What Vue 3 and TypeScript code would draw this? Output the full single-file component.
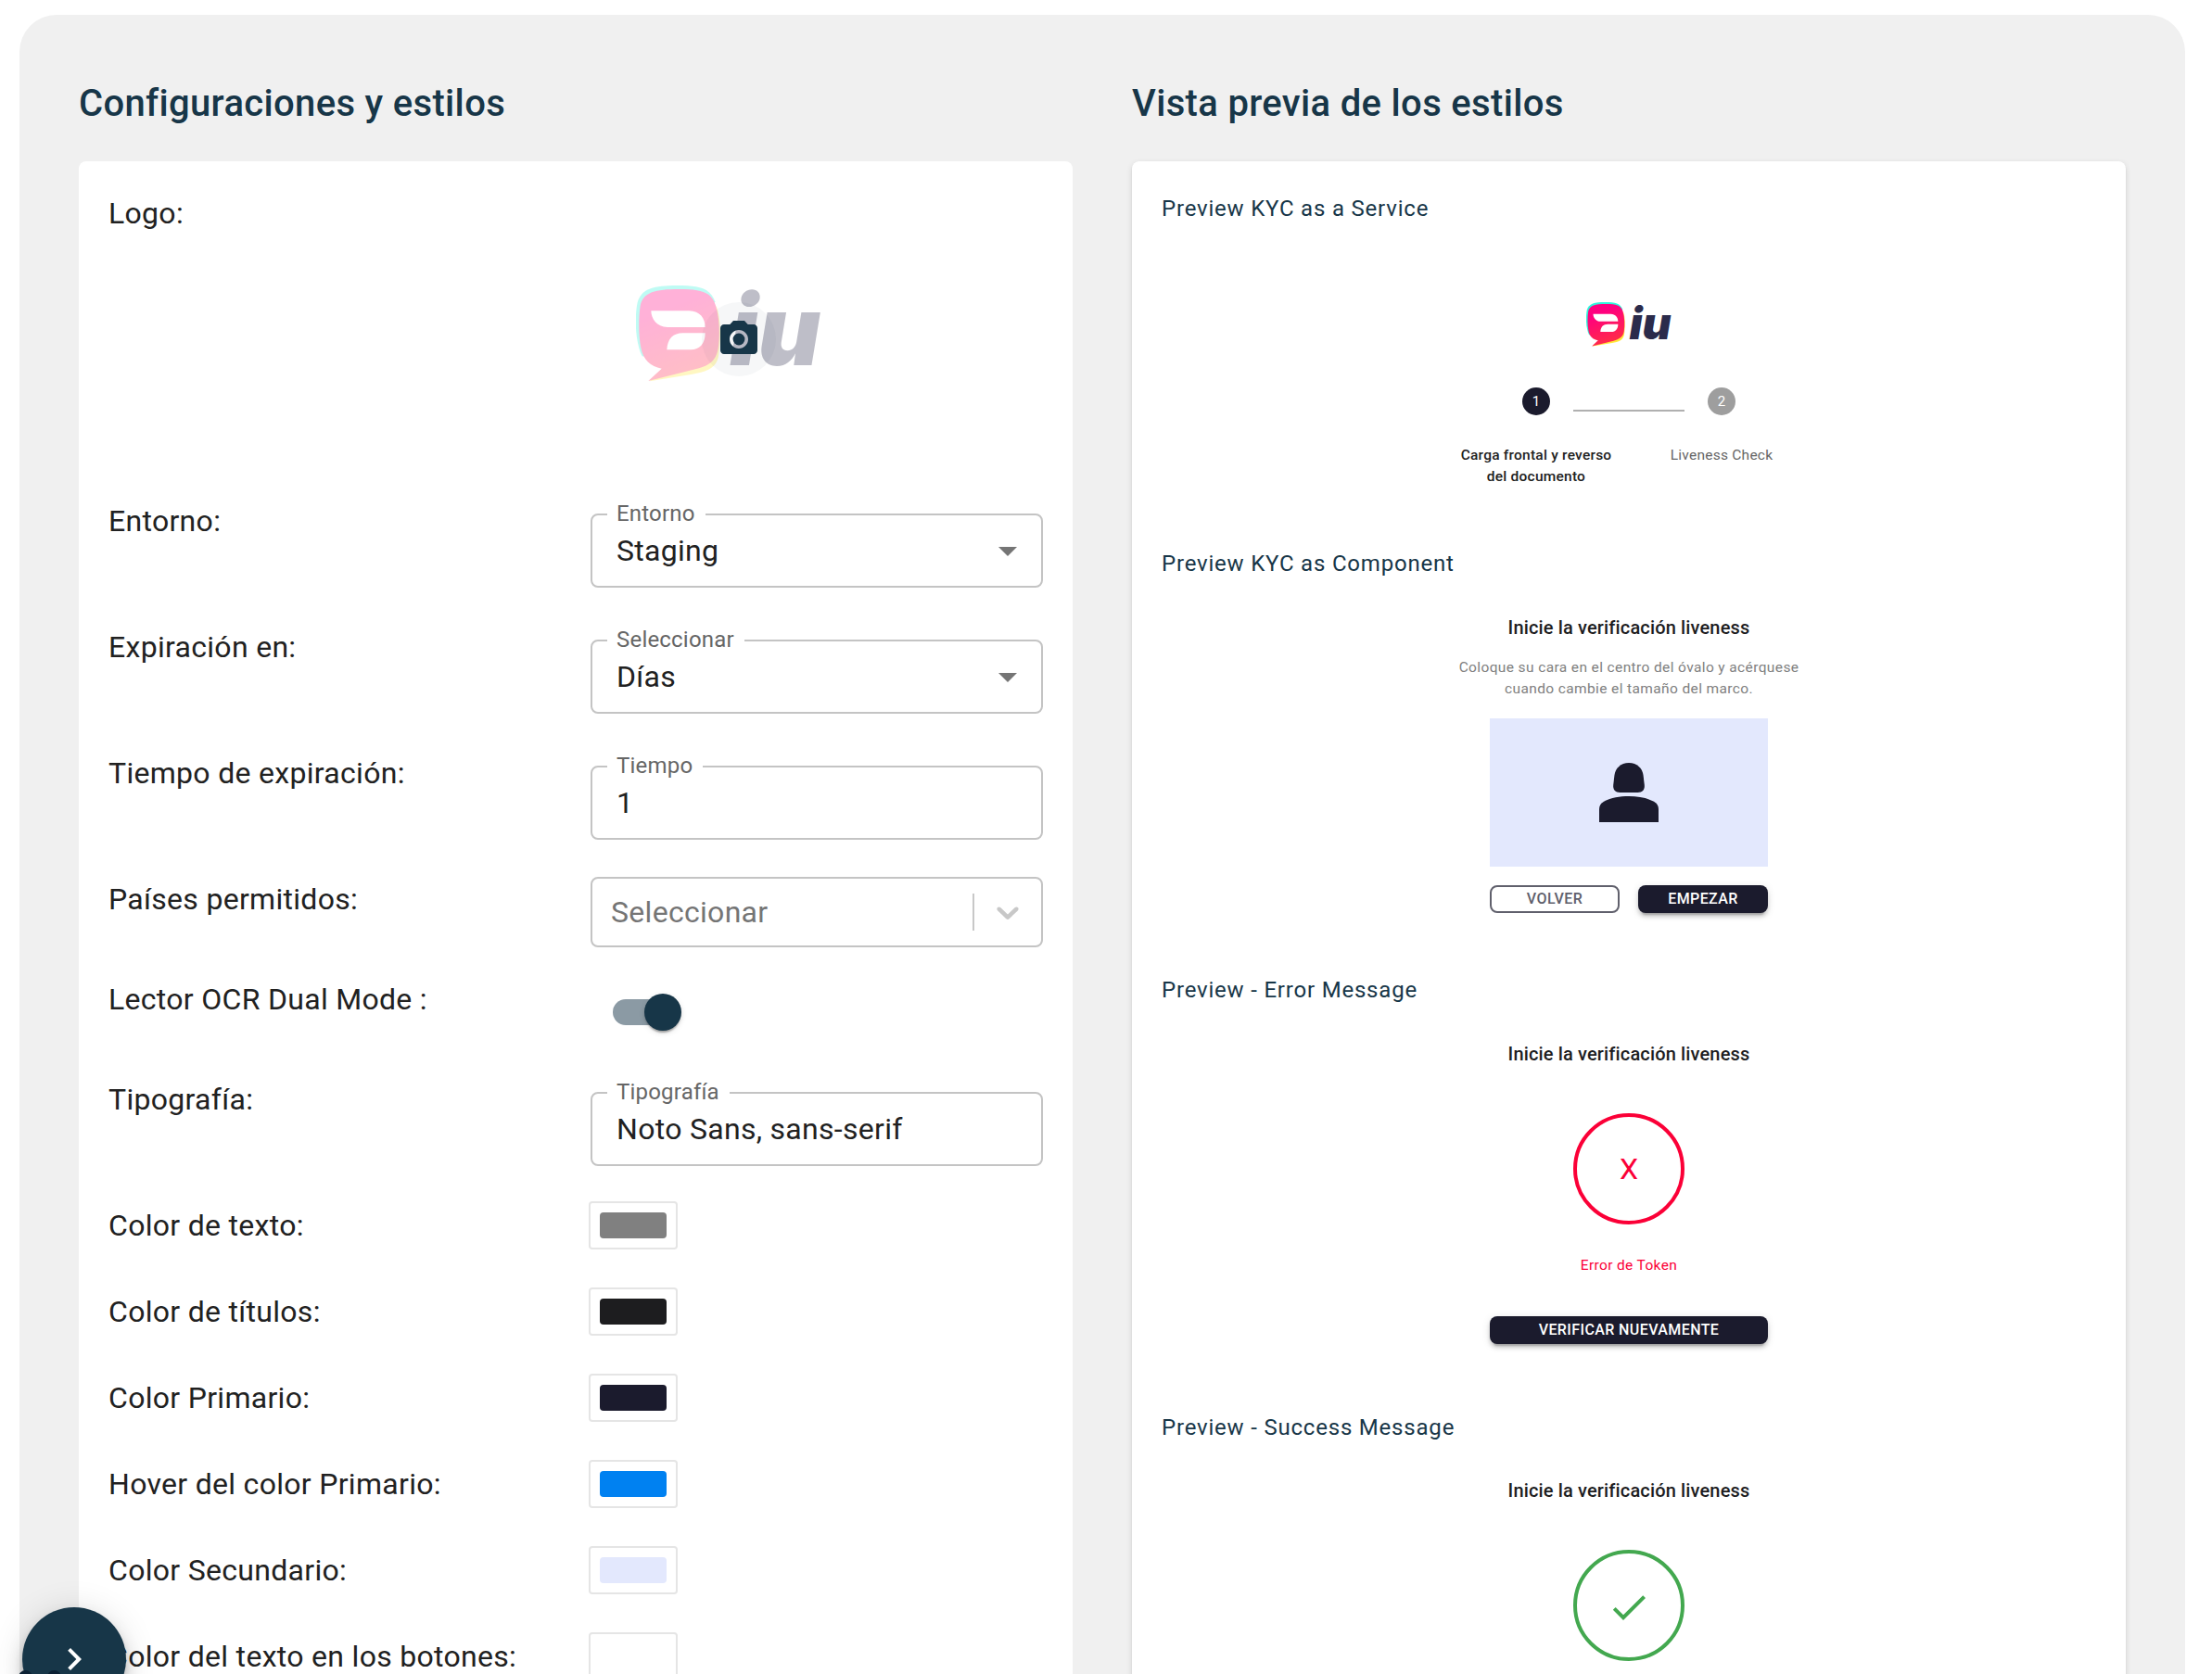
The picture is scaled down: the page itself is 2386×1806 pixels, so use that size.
<script setup lang="ts">
interface ColorRow { label: string; color: string }

const colors: ColorRow[] = [
  { label: 'Color de texto:', color: '#808080' },
  { label: 'Color de títulos:', color: '#1d1d1f' },
  { label: 'Color Primario:', color: '#1b1b2d' },
  { label: 'Hover del color Primario:', color: '#0081f1' },
  { label: 'Color Secundario:', color: '#e3e8fd' },
  { label: 'Color del texto en los botones:', color: '#ffffff' },
]
</script>

<template>
  <div class="page">
    <svg width="0" height="0" class="defs" aria-hidden="true">
      <defs>
        <linearGradient id="pink" x1="0" y1="0" x2="0.35" y2="1">
          <stop offset="0.3" stop-color="#ff007f" />
          <stop offset="1" stop-color="#ff2b48" />
        </linearGradient>
        <symbol id="brand" viewBox="138 83 600 312">
          <path fill="#2ff5dc" d="M270 83C345 83 378 92 394 135L300 330 158 312C137 270 132 190 143 138C155 92 198 83 270 83Z" />
          <path fill="#ffe83a" d="M398 150C413 190 413 250 406 305C402 350 365 363 320 370L182 393 240 340Z" />
          <path fill="url(#pink)" d="M278 95C350 95 382 104 396 148C409 190 410 245 404 287C397 330 370 344 330 354L178 392 221 352C185 345 162 325 154 285C146 245 146 190 152 148C162 104 200 95 278 95Z" />
          <path fill="#fff" d="M187 165H310C345 165 362 190 362 218H240C205 218 187 190 187 165ZM362 237C362 270 345 291 315 291H238C240 255 258 237 290 237Z" />
          <text x="441" y="341" class="brand-text">iu</text>
        </symbol>
      </defs>
    </svg>

    <main class="panel">
      <section class="column">
        <h2>Configuraciones y estilos</h2>
        <div class="card settings">
          <div class="row row-logo">
            <span class="label">Logo:</span>
            <div class="logo-edit">
              <svg class="brand large"><use href="#brand" /></svg>
              <div class="camera">
                <svg viewBox="0 0 24 24" width="48" height="48" fill="#173648"><circle cx="12" cy="12" r="3.2" /><path d="M9 2L7.17 4H4c-1.1 0-2 .9-2 2v12c0 1.1.9 2 2 2h16c1.1 0 2-.9 2-2V6c0-1.1-.9-2-2-2h-3.17L15 2H9zm3 15c-2.76 0-5-2.24-5-5s2.24-5 5-5 5 2.24 5 5-2.24 5-5 5z" /></svg>
              </div>
            </div>
          </div>
          <div class="row row-field">
            <span class="label">Entorno:</span>
            <fieldset class="field">
              <legend>Entorno</legend>
              <span class="value">Staging</span>
              <svg class="arrow" viewBox="0 0 24 24"><path d="M7 10l5 5 5-5z" /></svg>
            </fieldset>
          </div>
          <div class="row row-field">
            <span class="label">Expiración en:</span>
            <fieldset class="field">
              <legend>Seleccionar</legend>
              <span class="value">Días</span>
              <svg class="arrow" viewBox="0 0 24 24"><path d="M7 10l5 5 5-5z" /></svg>
            </fieldset>
          </div>
          <div class="row row-field">
            <span class="label">Tiempo de expiración:</span>
            <fieldset class="field">
              <legend>Tiempo</legend>
              <span class="value">1</span>
            </fieldset>
          </div>
          <div class="row row-mid">
            <span class="label">Países permitidos:</span>
            <div class="select">
              <span class="placeholder">Seleccionar</span>
              <i class="separator"></i>
              <svg viewBox="0 0 20 20" width="40" height="40" fill="#c8c8c8"><path d="M4.516 7.548c0.436-0.446 1.043-0.481 1.576 0l3.908 3.747 3.908-3.747c0.533-0.481 1.141-0.446 1.574 0 0.436 0.445 0.408 1.197 0 1.615-0.406 0.418-4.695 4.502-4.695 4.502-0.217 0.223-0.502 0.335-0.787 0.335s-0.57-0.112-0.789-0.335c0 0-4.287-4.084-4.695-4.502s-0.436-1.17 0-1.615z" /></svg>
            </div>
          </div>
          <div class="row row-mid">
            <span class="label">Lector OCR Dual Mode :</span>
            <div class="switch"><i class="track"></i><i class="thumb"></i></div>
          </div>
          <div class="row row-field">
            <span class="label">Tipografía:</span>
            <fieldset class="field">
              <legend>Tipografía</legend>
              <span class="value">Noto Sans, sans-serif</span>
            </fieldset>
          </div>
          <div v-for="c in colors" :key="c.label" class="row row-color">
            <span class="label">{{ c.label }}</span>
            <div class="swatch"><i :style="{ background: c.color }"></i></div>
          </div>
        </div>
      </section>

      <section class="column">
        <h2>Vista previa de los estilos</h2>
        <div class="card preview">
          <div class="block service">
            <h3>Preview KYC as a Service</h3>
            <svg class="brand small"><use href="#brand" /></svg>
            <div class="stepper">
              <div class="step"><b class="dot">1</b><span>Carga frontal y reverso<br>del documento</span></div>
              <i class="line"></i>
              <div class="step idle"><b class="dot">2</b><span>Liveness Check</span></div>
            </div>
          </div>

          <div class="block component">
            <h3>Preview KYC as Component</h3>
            <h4>Inicie la verificación liveness</h4>
            <p class="hint">Coloque su cara en el centro del óvalo y acérquese<br>cuando cambie el tamaño del marco.</p>
            <div class="frame">
              <svg viewBox="0 0 64 64" width="64" height="64" fill="#1b1b2d"><path d="M32 0C41 0 46.500 6 47.500 13L48.800 24C49.300 29 46.500 32 41.500 32H22.500C17.500 32 14.700 29 15.200 24L16.500 13C17.500 6 23 0 32 0Z" /><path d="M0 64V50C0 46 2 43.500 5 41.800C13 37.500 22 36 32 36S51 37.500 59 41.800C62 43.500 64 46 64 50V64Z" /></svg>
            </div>
            <div class="actions">
              <span class="btn outlined">VOLVER</span>
              <span class="btn">EMPEZAR</span>
            </div>
          </div>

          <div class="block error">
            <h3>Preview - Error Message</h3>
            <h4>Inicie la verificación liveness</h4>
            <div class="ring">X</div>
            <p class="error-text">Error de Token</p>
            <span class="btn wide">VERIFICAR NUEVAMENTE</span>
          </div>

          <div class="block success">
            <h3>Preview - Success Message</h3>
            <h4>Inicie la verificación liveness</h4>
            <div class="ring ok">
              <svg viewBox="0 0 24 24" width="48" height="48" fill="#43a84f"><path d="M9 16.17L4.83 12l-1.420 1.410L9 19 21 7l-1.410-1.410z" /></svg>
            </div>
          </div>
        </div>
      </section>
    </main>

    <div class="fab">
      <svg viewBox="0 0 24 24" width="48" height="48" fill="#fff"><path d="M10 6L8.590 7.410 13.170 12l-4.580 4.590L10 18l6-6z" /></svg>
    </div>
    <div class="badge"><i></i><i></i></div>
  </div>
</template>

<style>
body { margin: 0; background: #fff; }
</style>

<style scoped>
* { box-sizing: border-box; }
.page {
  position: relative; width: 2386px; height: 1806px; overflow: hidden;
  padding: 16px 29px 0 21px; background: #fff;
  font-family: Roboto, sans-serif; color: #212121;
}
.defs { position: absolute; }
.panel {
  display: flex; gap: 64px; height: 1900px; padding: 64px 64px 0;
  background: #f0f0f0; border-radius: 40px 40px 0 0;
}
.column { width: 1072px; flex: none; }
h2 {
  margin: 0 0 30px; font-size: 40px; line-height: 64px; font-weight: 500;
  letter-spacing: 0.33px; color: #173648;
}
.card { height: 1700px; padding: 32px; background: #fff; border-radius: 8px; }
.preview {
  box-shadow: 0 4px 2px -2px rgba(0,0,0,.1), 0 2px 2px rgba(0,0,0,.07), 0 2px 6px rgba(0,0,0,.12);
}
.row { display: flex; align-items: flex-start; }
.row-logo { height: 332px; }
.row-field { height: 136px; }
.row-mid { height: 108px; }
.row-color { height: 93px; }
.label { width: 520px; flex: none; font-size: 32px; line-height: 48px; letter-spacing: 0.3px; white-space: nowrap; }

.logo-edit {
  position: relative; width: 320px; height: 320px;
  display: flex; align-items: center; justify-content: center;
}
.brand { display: block; overflow: visible; }
.brand-text { font: italic 900 312px Inter, sans-serif; fill: #2b2b4b; }
.brand.large { position: absolute; left: 49px; top: 102px; width: 200px; height: 104px; opacity: .3; }
.brand.small { width: 92px; height: 48px; margin-top: 82px; }
.camera {
  position: relative; width: 80px; height: 80px; border-radius: 50%;
  background: rgba(23,54,72,.04); display: flex; align-items: center; justify-content: center;
}

.field {
  position: relative; width: 488px; height: 92px; margin: 4px 0 0; padding: 0 0 0 26px; min-width: 0;
  border: 2px solid #c4c4c4; border-radius: 8px;
}
.field legend {
  margin-left: -10px; padding: 0 11px 2px 10px; font-size: 24px; line-height: 24px;
  letter-spacing: 0.2px; color: #666;
}
.value { display: block; margin-top: 3px; font-size: 32px; line-height: 46px; letter-spacing: 0.3px; }
.arrow { position: absolute; right: 12px; top: 2px; width: 48px; height: 48px; fill: #757575; }

.select {
  display: flex; align-items: center; width: 488px; height: 76px;
  border: 2px solid #c4c4c4; border-radius: 8px; padding: 0 16px 0 20px;
}
.placeholder { flex: 1; font-size: 32px; letter-spacing: 0.3px; color: #757575; }
.separator { width: 2px; height: 40px; margin-right: 16px; background: #c8c8c8; }

.switch { position: relative; width: 116px; height: 76px; padding: 24px; }
.track { display: block; width: 68px; height: 28px; border-radius: 14px; background: #8b9aa4; }
.thumb {
  position: absolute; left: 58px; top: 18px; width: 40px; height: 40px; border-radius: 50%;
  background: #173648;
  box-shadow: 0 4px 2px -2px rgba(0,0,0,.2), 0 2px 2px rgba(0,0,0,.14), 0 2px 6px rgba(0,0,0,.12);
}
.swatch { padding: 10px; border-radius: 2px; box-shadow: 0 0 0 2px #e5e5e5; }
.swatch i { display: block; width: 72px; height: 28px; border-radius: 4px; }

.block { display: flex; flex-direction: column; align-items: center; }
.service { height: 383px; }
.component { height: 460px; }
.error { height: 472px; }
h3 {
  align-self: flex-start; margin: 0; font-size: 24px; line-height: 38px; font-weight: 400;
  letter-spacing: 0.8px; color: #173648;
}
h4 { margin: 34px 0 0; font-size: 20px; line-height: 32px; font-weight: 500; letter-spacing: 0.15px; color: #1d1d1f; }
.success h4 { margin-top: 33px; }
.stepper { display: flex; justify-content: center; margin-top: 44px; }
.step { display: flex; flex-direction: column; align-items: center; width: 80px; font-size: 15.5px; line-height: 23px; font-weight: 500; letter-spacing: 0.23px; text-align: center; white-space: nowrap; }
.idle { font-weight: 400; color: #666; letter-spacing: 0.25px; }
.dot {
  width: 30px; height: 30px; margin-bottom: 32px; border-radius: 50%; background: #1b1b2d; color: #fff;
  font-size: 15px; line-height: 30px; font-weight: 400; letter-spacing: 0;
}
.idle .dot { background: #9e9e9e; }
.line { width: 120px; height: 2px; margin-top: 24px; background: #b0b0b0; }
.hint { margin: 16px 0 0; font-size: 15.5px; line-height: 23px; letter-spacing: 0.38px; color: #808080; text-align: center; }
.frame { display: flex; align-items: center; justify-content: center; width: 300px; height: 160px; margin-top: 20px; background: #e3e8fd; }
.actions { display: flex; gap: 20px; margin-top: 20px; }
.btn {
  display: block; width: 140px; height: 30px; border-radius: 8px; background: #1b1b2d; color: #fff;
  font-size: 16px; line-height: 29px; font-weight: 500; letter-spacing: 0.4px; text-align: center;
  box-shadow: 0 6px 2px -4px rgba(0,0,0,.2), 0 4px 4px rgba(0,0,0,.14), 0 2px 10px rgba(0,0,0,.12);
}
.outlined { background: #fff; border: 2px solid #60606c; color: #60606c; line-height: 25px; box-shadow: none; }
.wide { width: 300px; margin-top: 42px; }
.ring {
  display: flex; align-items: center; justify-content: center; width: 120px; height: 120px; margin-top: 48px;
  border: 4px solid #fb0037; border-radius: 50%; color: #fb0037; font-size: 32px;
}
.ok { border-color: #43a84f; }
.ok svg { margin-top: 4px; }
.error-text { margin: 32px 0 0; font-size: 15.5px; line-height: 25px; letter-spacing: 0.35px; color: #fb0037; }

.fab {
  position: absolute; left: 24px; top: 1734px; width: 112px; height: 112px; border-radius: 50%;
  background: #173648; display: flex; align-items: center; justify-content: center;
  box-shadow: 0 6px 10px -2px rgba(0,0,0,.2), 0 12px 20px rgba(0,0,0,.14), 0 2px 36px rgba(0,0,0,.12);
}
.badge { position: absolute; left: 20px; top: 1802px; width: 46px; height: 8px; display: flex; justify-content: space-between; }
.badge i { width: 15px; height: 15px; border-radius: 50%; background: #0b2033; }
</style>
